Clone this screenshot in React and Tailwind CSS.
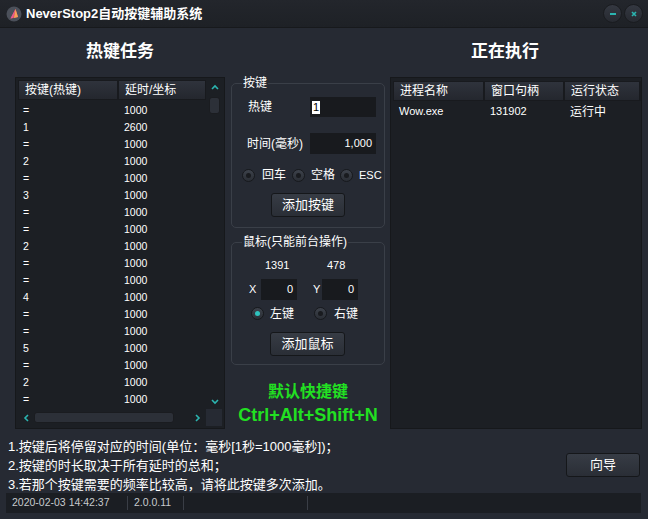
import React from 'react';

const CJK = '"Liberation Sans", "Noto Sans CJK SC", sans-serif';

const leftRows = [
    ['=', '1000'], ['1', '2600'], ['=', '1000'], ['2', '1000'], ['=', '1000'], ['3', '1000'],
    ['=', '1000'], ['=', '1000'], ['2', '1000'], ['=', '1000'], ['=', '1000'], ['4', '1000'],
    ['=', '1000'], ['=', '1000'], ['5', '1000'], ['=', '1000'], ['2', '1000'], ['=', '1000'],
];

const Chevron = ({ dir }) => {
    const paths = {
        up: 'M1 5 L4 2 L7 5',
        down: 'M1 2 L4 5 L7 2',
        left: 'M5 1 L2 4 L5 7',
        right: 'M2 1 L5 4 L2 7',
    };
    return (
        <svg width="8" height="8" viewBox="0 0 8 8">
            <path d={paths[dir]} fill="none" stroke="#2bb5b0" strokeWidth="1.6" />
        </svg>
    );
};

const Radio = ({ checked }) => (
    <span className="w-[13px] h-[13px] rounded-full bg-gradient-to-b from-[#3d424b] to-[#2a2e35] border border-[#17191d] flex items-center justify-center shrink-0">
        <span className={`w-[5px] h-[5px] rounded-full ${checked ? 'bg-[#2ec2bd]' : 'bg-[#191b1f]'}`} />
    </span>
);

const Button = ({ children, className = '' }) => (
    <button className={`h-[24px] shrink-0 rounded-[3px] border border-[#15171a] bg-gradient-to-b from-[#373c45] to-[#2a2e36] text-[13px] text-white flex items-center justify-center ${className}`}>
        {children}
    </button>
);

const HeaderCell = ({ children, className = '' }) => (
    <div className={`h-[20px] shrink-0 bg-gradient-to-b from-[#2f333c] to-[#24272e] border border-[#181a1e] flex items-center px-[6px] text-[12px] text-white whitespace-nowrap ${className}`}>
        {children}
    </div>
);

const App = () => {
    return (
        <div className="w-[648px] h-[519px] bg-[#262a33] flex flex-col overflow-hidden select-none" style={{ fontFamily: CJK }}>
            {/* Title bar */}
            <div className="h-[28px] shrink-0 bg-gradient-to-b from-[#23262c] to-[#1e2126] border-b border-[#17191c] flex items-center pl-[6px] pr-[5px]">
                <svg width="16" height="16" viewBox="0 0 16 16" className="shrink-0">
                    <circle cx="8" cy="8" r="7.5" fill="#4b505a" />
                    <path d="M9.5 3 L4.5 12.5 L12 11 Z" fill="#e8584f" />
                    <path d="M9.5 3 L8 12 L12 11 Z" fill="#f5a25b" />
                    <path d="M9.5 3 L4.5 12.5 L7 12 Z" fill="#e45b9a" />
                </svg>
                <span className="ml-[4px] text-[13px] font-bold text-white">NeverStop2自动按键辅助系统</span>
                <div className="ml-auto flex gap-[2px]">
                    <span className="w-[19px] h-[19px] rounded-full bg-gradient-to-b from-[#343841] to-[#272a31] border border-[#1a1c20] flex items-center justify-center">
                        <span className="w-[6px] h-[2px] bg-[#2bb5b0]" />
                    </span>
                    <span className="w-[19px] h-[19px] rounded-full bg-gradient-to-b from-[#343841] to-[#272a31] border border-[#1a1c20] flex items-center justify-center">
                        <svg width="6" height="6" viewBox="0 0 6 6">
                            <path d="M1 1 L5 5 M5 1 L1 5" stroke="#2bb5b0" strokeWidth="1.6" />
                        </svg>
                    </span>
                </div>
            </div>

            {/* Main area */}
            <div className="flex pl-[15px] h-[401px] shrink-0">
                {/* Left column */}
                <div className="w-[210px] shrink-0 flex flex-col">
                    <div className="h-[49px] flex items-center justify-center text-[17px] font-bold text-white pb-[2px]">热键任务</div>
                    <div className="h-[352px] bg-[#1c1f24] border border-[#16181b] p-[2px] flex flex-col">
                        <div className="flex flex-1 min-h-0">
                            <div className="w-[188px] flex flex-col">
                                <div className="flex">
                                    <HeaderCell className="w-[100px]">按键(热键)</HeaderCell>
                                    <HeaderCell className="w-[88px]">延时/坐标</HeaderCell>
                                </div>
                                <div className="flex flex-col pt-[2px]">
                                    {leftRows.map((r, i) => (
                                        <div key={i} className="h-[17px] flex items-center text-[10.5px] text-white">
                                            <span className="w-[100px] pl-[5px]">{r[0]}</span>
                                            <span className="pl-[6px]">{r[1]}</span>
                                        </div>
                                    ))}
                                </div>
                            </div>
                            <div className="w-[17px] ml-[1px] flex flex-col items-center pt-[4px]">
                                <Chevron dir="up" />
                                <div className="mt-[5px] w-[11px] h-[17px] rounded-[3px] bg-[#2c3038] border border-[#1a1c20]" />
                                <div className="mt-auto mb-[3px]">
                                    <Chevron dir="down" />
                                </div>
                            </div>
                        </div>
                        <div className="h-[17px] flex items-center">
                            <div className="w-[188px] flex items-center pl-[5px]">
                                <Chevron dir="left" />
                                <div className="ml-[3px] w-[140px] h-[11px] rounded-[3px] bg-[#2c3038] border border-[#1a1c20]" />
                                <div className="ml-auto mr-[3px]">
                                    <Chevron dir="right" />
                                </div>
                            </div>
                            <div className="ml-[1px] w-[16px] h-[17px] bg-[#262a33]" />
                        </div>
                    </div>
                </div>

                {/* Middle column */}
                <div className="w-[154px] shrink-0 ml-[6px] flex flex-col">
                    <div className="mt-[55px] h-[145px] relative border border-[#3a3f48] rounded-[5px] flex flex-col text-white whitespace-nowrap">
                        <span className="absolute -top-[9px] left-[10px] px-[1px] bg-[#262a33] text-[12px] leading-[16px]">按键</span>
                        <div className="mt-[13px] ml-[16px] flex items-center">
                            <span className="text-[12px] w-[62px]">热键</span>
                            <div className="w-[66px] h-[20px] shrink-0 bg-[#181a1e] flex items-center px-[2px]">
                                <span className="bg-white text-black text-[11px] leading-[13px] px-[1px]">1</span>
                            </div>
                        </div>
                        <div className="mt-[16px] ml-[15px] flex items-center">
                            <span className="text-[12px] w-[63px]">时间(毫秒)</span>
                            <div className="w-[66px] h-[21px] shrink-0 bg-[#181a1e] flex items-center justify-end px-[4px] text-[11px]">1,000</div>
                        </div>
                        <div className="mt-[12px] ml-[10px] flex items-center text-[12px]">
                            <Radio />
                            <span className="ml-[7px]">回车</span>
                            <span className="ml-[6px]"><Radio /></span>
                            <span className="ml-[6px]">空格</span>
                            <span className="ml-[5px]"><Radio /></span>
                            <span className="ml-[6px] text-[11px]">ESC</span>
                        </div>
                        <Button className="mt-[9px] ml-[39px] w-[74px]">添加按键</Button>
                    </div>

                    <div className="mt-[14px] h-[123px] relative border border-[#3a3f48] rounded-[5px] flex flex-col text-white whitespace-nowrap">
                        <span className="absolute -top-[9px] left-[10px] px-[1px] bg-[#262a33] text-[12px] leading-[16px]">鼠标(只能前台操作)</span>
                        <div className="mt-[14px] flex text-[11px]">
                            <span className="ml-[33px] w-[62px]">1391</span>
                            <span>478</span>
                        </div>
                        <div className="mt-[5px] flex items-center text-[11px]">
                            <span className="ml-[17px] w-[12px] shrink-0">X</span>
                            <div className="w-[36px] h-[21px] shrink-0 bg-[#181a1e] flex items-center justify-end px-[4px]">0</div>
                            <span className="ml-[16px] w-[9px] shrink-0">Y</span>
                            <div className="w-[36px] h-[21px] shrink-0 bg-[#181a1e] flex items-center justify-end px-[4px]">0</div>
                        </div>
                        <div className="mt-[5px] flex items-center text-[12px]">
                            <span className="ml-[19px]"><Radio checked /></span>
                            <span className="ml-[6px]">左键</span>
                            <span className="ml-[20px]"><Radio /></span>
                            <span className="ml-[7px]">右键</span>
                        </div>
                        <Button className="mt-[9px] ml-[38px] w-[75px]">添加鼠标</Button>
                    </div>

                    <div className="mt-[16px] flex flex-col items-center text-[#22e022] font-bold whitespace-nowrap">
                        <span className="text-[16px] leading-[22px]">默认快捷键</span>
                        <span className="text-[18px] leading-[24px]" style={{ fontFamily: '"Liberation Sans", sans-serif' }}>Ctrl+Alt+Shift+N</span>
                    </div>
                </div>

                {/* Right column */}
                <div className="w-[252px] shrink-0 ml-[5px] flex flex-col">
                    <div className="h-[49px] flex items-center justify-center text-[17px] font-bold text-white pb-[2px] pr-[22px]">正在执行</div>
                    <div className="h-[352px] bg-[#1c1f24] border border-[#16181b] pt-[3px] pl-[2px] flex flex-col overflow-hidden">
                        <div className="flex">
                            <HeaderCell className="w-[91px]">进程名称</HeaderCell>
                            <HeaderCell className="w-[80px]">窗口句柄</HeaderCell>
                            <HeaderCell className="w-[76px]">运行状态</HeaderCell>
                            <HeaderCell className="w-[3px] px-0" />
                        </div>
                        <div className="h-[17px] mt-[2px] flex items-center text-white">
                            <span className="w-[91px] pl-[6px] text-[11px]">Wow.exe</span>
                            <span className="w-[80px] pl-[6px] text-[11px]">131902</span>
                            <span className="pl-[6px] text-[12px]">运行中</span>
                        </div>
                    </div>
                </div>
            </div>

            {/* Bottom notes */}
            <div className="flex pl-[8px] pr-[8px] pt-[8px] h-[64px] shrink-0">
                <div className="flex flex-col text-[13px] text-white leading-[19px]">
                    <span>1.按键后将停留对应的时间(单位：毫秒[1秒=1000毫秒])；</span>
                    <span>2.按键的时长取决于所有延时的总和；</span>
                    <span>3.若那个按键需要的频率比较高，请将此按键多次添加。</span>
                </div>
                <Button className="ml-auto mt-[16px] w-[74px]">向导</Button>
            </div>

            {/* Status bar */}
            <div className="mx-[6px] w-[635px] h-[20px] bg-[#1b1e23] flex items-center text-[10.5px] text-[#c8cacd] shrink-0">
                <span className="w-[121px] pl-[6px]">2020-02-03 14:42:37</span>
                <span className="h-[14px] border-l border-[#3a3e46]" />
                <span className="w-[55px] pl-[6px]">2.0.0.11</span>
                <span className="h-[14px] border-l border-[#3a3e46]" />
                <span className="w-[123px]" />
                <span className="h-[14px] border-l border-[#3a3e46]" />
            </div>
        </div>
    );
};

export default App;
